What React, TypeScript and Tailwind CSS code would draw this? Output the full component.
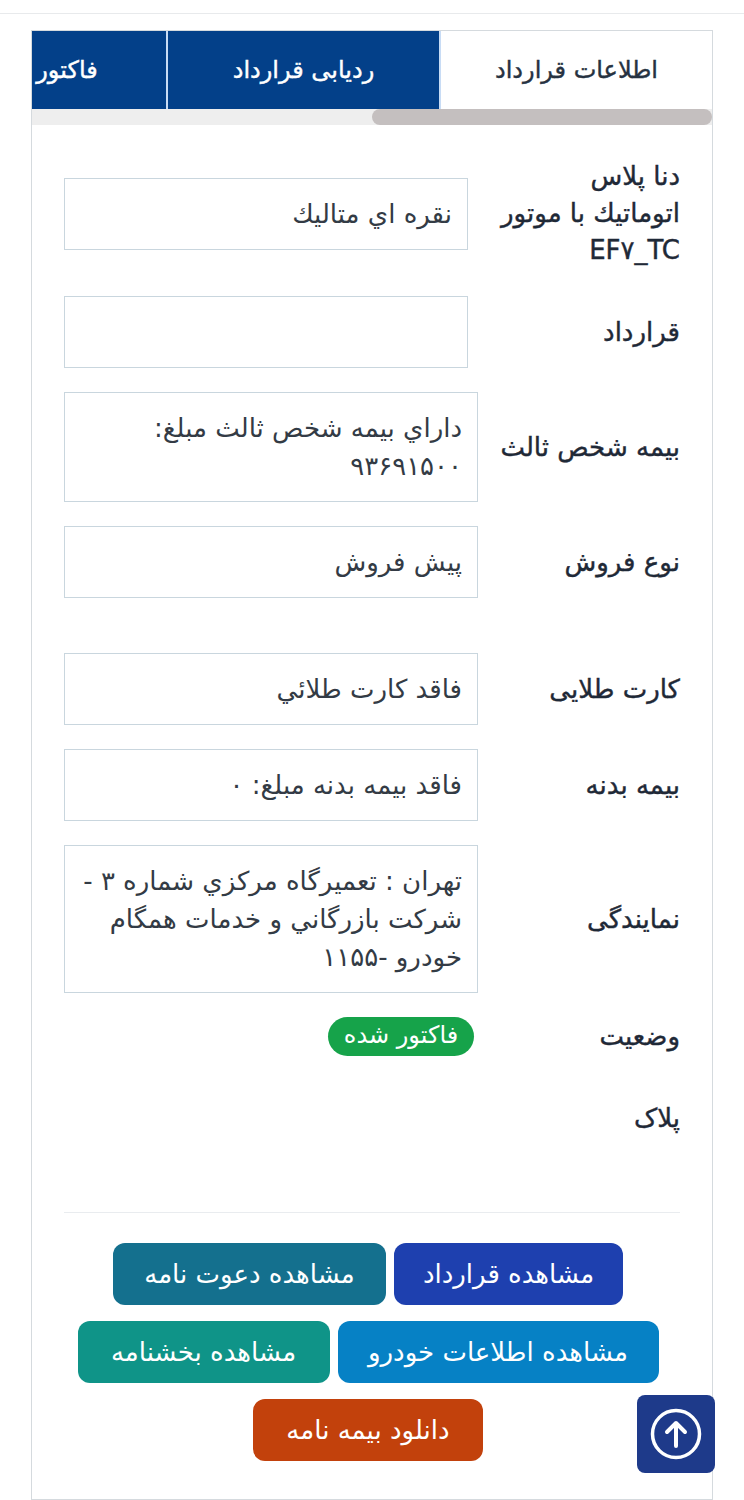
import React from 'react';

const labelClass = 'text-[26px] leading-[37px] font-medium text-[#1f2937] [-webkit-text-stroke:0.4px]';
const boxClass = 'border border-[#c9d6de] bg-white px-[15px] py-4 text-[26px] leading-[38px] text-[#333b45]';

interface RowProps {
  label: React.ReactNode;
  value?: React.ReactNode;
  narrow?: boolean;
  className?: string;
}

const Row: React.FC<RowProps> = ({ label, value, narrow, className }) => {
  return (
    <div className={`flex items-center ${className ?? ''}`}>
      <div className={`${narrow ? 'w-[212px]' : 'w-[202px]'} shrink-0 pl-4 ${labelClass}`}>{label}</div>
      <div className={`${boxClass} flex-1 min-h-[72px]`}>{value}</div>
    </div>
  );
};

const ActionButton: React.FC<{ text: string; color: string; width: string }> = ({ text, color, width }) => {
  return (
    <button className={`h-[62px] ${width} ${color} rounded-xl text-white text-[26px] leading-[37px] text-center`}>{text}</button>
  );
};

export default function App() {
  return (
    <div dir="rtl" className="relative h-[1500px] bg-white font-['DejaVu_Sans','Noto_Sans',sans-serif] overflow-hidden">
      <div className="h-[14px] border-b border-[#e8eaec]" />
      <div className="mx-[31px] mt-4 h-[1470px] border border-[#d5dade]">
        {/* tabs */}
        <div className="flex h-[78px] overflow-hidden">
          <div className="w-[273px] shrink-0 flex items-center justify-center bg-white border-l-2 border-[#c8dcf5] text-[24px] font-medium text-[#263241] [-webkit-text-stroke:0.4px]">
            اطلاعات قرارداد
          </div>
          <div className="w-[273px] shrink-0 flex items-center justify-center bg-[#034089] border-l-2 border-[#c8dcf5] text-[24px] font-medium text-white [-webkit-text-stroke:0.4px]">
            ردیابی قرارداد
          </div>
          <div className="w-[198px] shrink-0 flex items-center justify-center bg-[#034089] text-[24px] font-medium text-white [-webkit-text-stroke:0.4px]">
            فاکتور
          </div>
        </div>
        <div className="h-4 bg-[#eeeeee]">
          <div className="h-4 w-[340px] rounded-full bg-[#c4bfbf]" />
        </div>

        {/* details */}
        <div className="px-8 pt-[33px]">
          <Row
            narrow
            label={<>دنا پلاس<br />اتوماتيك با موتور<br />EF۷_TC</>}
            value="نقره اي متاليك"
          />
          <Row narrow className="mt-[27px]" label="قرارداد" />
          <Row className="mt-6" label="بیمه شخص ثالث" value="داراي بيمه شخص ثالث مبلغ: ۹۳۶۹۱۵۰۰" />
          <Row className="mt-6" label="نوع فروش" value="پيش فروش" />
          <Row className="mt-[55px]" label="کارت طلایی" value="فاقد کارت طلائي" />
          <Row className="mt-6" label="بیمه بدنه" value="فاقد بيمه بدنه مبلغ: ۰" />
          <Row className="mt-6" label="نمایندگی" value="تهران : تعميرگاه مرکزي شماره ۳ - شرکت بازرگاني و خدمات همگام خودرو -۱۱۵۵" />

          <div className="flex items-center mt-6">
            <div className={`w-[206px] shrink-0 ${labelClass}`}>وضعیت</div>
            <span className="h-[39px] w-[146px] rounded-full bg-[#16a34a] text-white text-[24px] leading-[37px] text-center">فاکتور شده</span>
          </div>
          <div className={`mt-[44px] ${labelClass}`}>پلاک</div>

          <hr className="mt-[75px] border-[#e9ecef]" />

          {/* buttons */}
          <div className="mt-[30px] pr-2 flex flex-col items-center gap-4">
            <div className="flex gap-2">
              <ActionButton text="مشاهده قرارداد" color="bg-[#1e40af]" width="w-[229px]" />
              <ActionButton text="مشاهده دعوت نامه" color="bg-[#14708e]" width="w-[273px]" />
            </div>
            <div className="flex gap-2">
              <ActionButton text="مشاهده اطلاعات خودرو" color="bg-[#0681c5]" width="w-[321px]" />
              <ActionButton text="مشاهده بخشنامه" color="bg-[#0f9488]" width="w-[252px]" />
            </div>
            <ActionButton text="دانلود بیمه نامه" color="bg-[#c2410c]" width="w-[230px]" />
          </div>
        </div>
      </div>

      {/* back to top */}
      <button className="absolute left-[637px] top-[1395px] w-[78px] h-[78px] rounded-lg bg-[#1e3a8a] flex items-center justify-center">
        <svg width="52" height="52" viewBox="0 0 52 52" fill="none" stroke="white" strokeLinecap="round" strokeLinejoin="round">
          <circle cx="26" cy="26" r="23.5" strokeWidth="3.5" />
          <path d="M26 38V15M17 24l9-9 9 9" strokeWidth="4" />
        </svg>
      </button>
    </div>
  );
}
